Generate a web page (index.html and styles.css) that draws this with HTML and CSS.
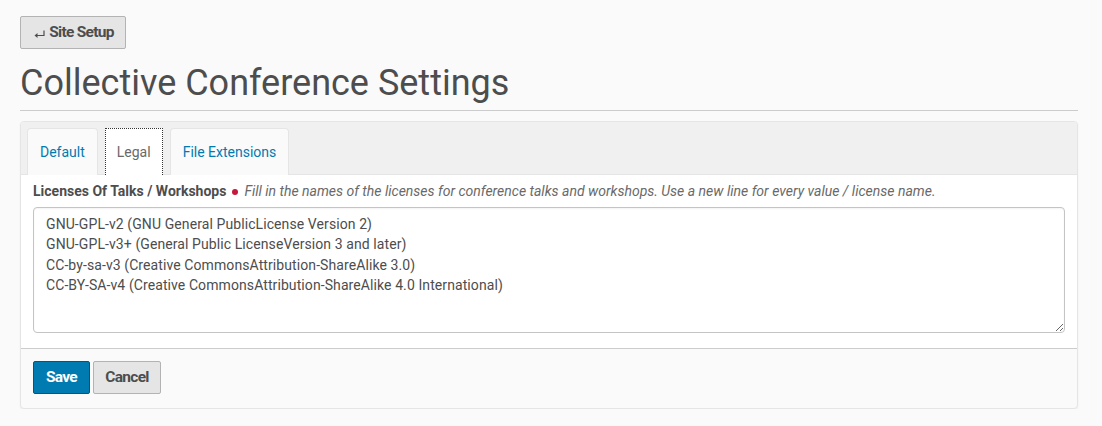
FILE: index.html
```html
<!DOCTYPE html>
<html>
<head>
<meta charset="utf-8">
<link rel="stylesheet" href="styles.css">
</head>
<body>
<div class="page">
  <a class="btn btn-back" href="#"><svg class="arrow" width="11" height="8" viewBox="0 0 11 8"><path d="M10 0.5 V5.5 H2" fill="none" stroke="#4d4d4d" stroke-width="1.2"/><path d="M0.5 5.5 L3.5 3 V8 Z" fill="#4d4d4d"/></svg> Site Setup</a>
  <h1 class="title">Collective Conference Settings</h1>
  <div class="panel">
    <div class="tabs">
      <a class="tab" href="#">Default</a>
      <a class="tab active" href="#">Legal</a>
      <a class="tab" href="#">File Extensions</a>
    </div>
    <div class="body">
      <div class="field-label">
        <span class="label">Licenses Of Talks / Workshops</span>
        <span class="required"></span>
        <span class="help">Fill in the names of the licenses for conference talks and workshops. Use a new line for every value / license name.</span>
      </div>
      <textarea class="area">GNU-GPL-v2 (GNU General PublicLicense Version 2)
GNU-GPL-v3+ (General Public LicenseVersion 3 and later)
CC-by-sa-v3 (Creative CommonsAttribution-ShareAlike 3.0)
CC-BY-SA-v4 (Creative CommonsAttribution-ShareAlike 4.0 International)</textarea>
    </div>
    <div class="footer">
      <button class="btn btn-primary">Save</button>
      <button class="btn btn-default">Cancel</button>
    </div>
  </div>
</div>
</body>
</html>
```
FILE: styles.css
```css
html, body {
  margin: 0;
  padding: 0;
  background: #fafafa;
  font-family: Roboto, "Liberation Sans", sans-serif;
  color: #4d4d4d;
}
.page {
  padding: 16px 24px 0 20px;
}
.btn {
  display: inline-block;
  box-sizing: border-box;
  height: 33px;
  padding: 0 11px;
  font-family: Roboto, sans-serif;
  font-weight: 700;
  font-size: 15.5px;
  letter-spacing: -0.7px;
  line-height: 31px;
  border-radius: 2px;
  border: 1px solid #b3b3b3;
  text-decoration: none;
  cursor: pointer;
}
.btn-back {
  background: #e5e5e5;
  color: #4d4d4d;
  width: 106px;
  padding: 0 0 0 13px;
}
.btn-back .arrow {
  vertical-align: -1px;
  margin-right: 1px;
}
.title {
  margin: 13px 0 0;
  font-size: 36px;
  font-weight: 400;
  line-height: 42px;
  color: #4d4d4d;
  padding-bottom: 6px;
  border-bottom: 1px solid #cccccc;
}
.panel {
  margin-top: 10px;
  border: 1px solid #e5e5e5;
  border-radius: 4px;
  background: #fafafa;
  box-shadow: 0 1px 2px rgba(0,0,0,0.05);
}
.tabs {
  display: flex;
  gap: 7px;
  background: #f0f0f0;
  padding: 6px 0 0 6px;
  border-bottom: 1px solid #e5e5e5;
  border-radius: 4px 4px 0 0;
}
.tab {
  display: block;
  height: 47px;
  box-sizing: border-box;
  padding: 0 12px;
  line-height: 46px;
  font-size: 14px;
  color: #007bb1;
  text-decoration: none;
  background: #fafafa;
  border: 1px solid #e5e5e5;
  border-bottom: none;
  border-radius: 4px 4px 0 0;
  margin-bottom: -1px;
}
.tab.active {
  background: #ffffff;
  color: #696969;
  border: 1px dotted #333;
  border-bottom: none;
  border-radius: 0;
  padding: 0 11px;
}
.body {
  background: #fff;
  padding: 7px 12px 15px 12px;
  border-bottom: 1px solid #cccccc;
}
.field-label {
  font-size: 14px;
  line-height: 18px;
  margin-bottom: 7px;
}
.label {
  font-weight: 700;
  color: #4d4d4d;
}
.required {
  display: inline-block;
  width: 6px;
  height: 6px;
  border-radius: 50%;
  background: #c4183c;
  margin: 0 3px 1px 2px;
  vertical-align: middle;
}
.help {
  font-style: italic;
  font-size: 14px;
  color: #696969;
}
.area {
  display: block;
  box-sizing: border-box;
  width: 100%;
  height: 126px;
  padding: 6px 12px;
  font-family: Roboto, sans-serif;
  font-size: 14px;
  letter-spacing: 0.09px;
  line-height: 20.4px;
  color: #4d4d4d;
  border: 1px solid #c4c4c4;
  border-radius: 4px;
  background: #fff;
  resize: vertical;
  box-shadow: inset 0 1px 2px rgba(0,0,0,0.05);
  overflow: hidden;
}
.footer {
  padding: 12px 12px 14px;
  display: flex;
  gap: 3px;
}
.btn-primary {
  background: #007bb1;
  color: #fff;
  border-color: #00587f;
  width: 57px;
  padding: 0;
}
.btn-default {
  background: #e5e5e5;
  color: #4d4d4d;
  width: 68px;
  padding: 0;
}
```
